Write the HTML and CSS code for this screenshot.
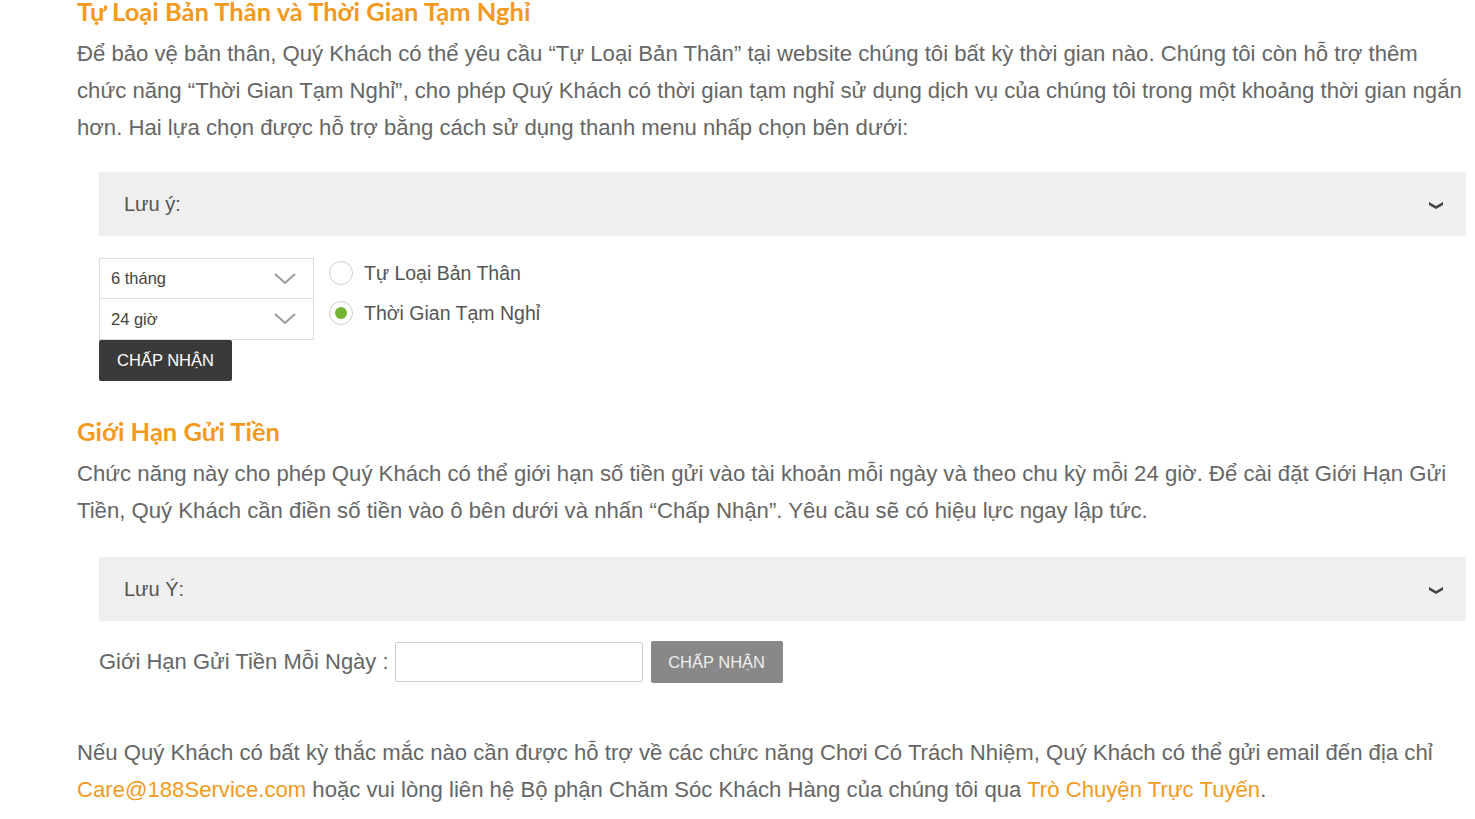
FILE: index.html
```html
<!DOCTYPE html>
<html>
  <head>
    <title>Chơi Có Trách Nhiệm</title>
    <meta charset="utf-8">
    <meta name="viewport" content="width=device-width, initial-scale=1">
    <link rel="stylesheet" href="styles.css">
  </head>
<body>
<div class="page">
  <h2 class="title first">Tự Loại Bản Thân và Thời Gian Tạm Nghỉ</h2>
  <p>Để bảo vệ bản thân, Quý Khách có thể yêu cầu “Tự Loại Bản Thân” tại website chúng tôi bất kỳ thời gian nào. Chúng tôi còn hỗ trợ thêm chức năng “Thời Gian Tạm Nghỉ”, cho phép Quý Khách có thời gian tạm nghỉ sử dụng dịch vụ của chúng tôi trong một khoảng thời gian ngắn hơn. Hai lựa chọn được hỗ trợ bằng cách sử dụng thanh menu nhấp chọn bên dưới:</p>

  <div class="note">
    <span>Lưu ý:</span>
    <svg class="caret" width="16" height="10" viewBox="0 0 16 10"><path d="M1 2 L8 6 L15 2 L15 5 L8 9 L1 5 Z" fill="#444"/></svg>
  </div>

  <div class="exclude">
    <div class="selects">
      <div class="select">
        <span>6 tháng</span>
        <svg width="24" height="14" viewBox="0 0 24 14"><path d="M2 2 L12 11 L22 2" fill="none" stroke="#999" stroke-width="2"/></svg>
      </div>
      <div class="select">
        <span>24 giờ</span>
        <svg width="24" height="14" viewBox="0 0 24 14"><path d="M2 2 L12 11 L22 2" fill="none" stroke="#999" stroke-width="2"/></svg>
      </div>
      <button class="btn dark">CHẤP NHẬN</button>
    </div>
    <div class="radios">
      <label class="radio"><span class="dot"></span>Tự Loại Bản Thân</label>
      <label class="radio on"><span class="dot"></span>Thời Gian Tạm Nghỉ</label>
    </div>
  </div>

  <h2 class="title">Giới Hạn Gửi Tiền</h2>
  <p>Chức năng này cho phép Quý Khách có thể giới hạn số tiền gửi vào tài khoản mỗi ngày và theo chu kỳ mỗi 24 giờ. Để cài đặt Giới Hạn Gửi Tiền, Quý Khách cần điền số tiền vào ô bên dưới và nhấn “Chấp Nhận”. Yêu cầu sẽ có hiệu lực ngay lập tức.</p>

  <div class="note second">
    <span>Lưu Ý:</span>
    <svg class="caret" width="16" height="10" viewBox="0 0 16 10"><path d="M1 2 L8 6 L15 2 L15 5 L8 9 L1 5 Z" fill="#444"/></svg>
  </div>

  <div class="limit">
    <span class="limit-label">Giới Hạn Gửi Tiền Mỗi Ngày :</span>
    <input type="text" class="amount">
    <button class="btn grey">CHẤP NHẬN</button>
  </div>

  <p class="contact">Nếu Quý Khách có bất kỳ thắc mắc nào cần được hỗ trợ về các chức năng Chơi Có Trách Nhiệm, Quý Khách có thể gửi email đến địa chỉ <a href="#">Care@188Service.com</a> hoặc vui lòng liên hệ Bộ phận Chăm Sóc Khách Hàng của chúng tôi qua <a href="#">Trò Chuyện Trực Tuyến</a>.</p>
</div>
</body>
</html>
```

FILE: styles.css
```css
body {
  margin: 0;
  background: #fff;
  font-family: "Liberation Sans", Arial, sans-serif;
  color: #666;
}
.page {
  width: 1389px;
  padding-left: 77px;
}
.title {
  font-family: Lato, "Open Sans", sans-serif;
  font-weight: bold;
  font-size: 25.5px;
  color: #f39a1e;
  margin: 0;
  line-height: 30px;
}
.title.first {
  margin-top: -4px;
}
p {
  margin: 9px -2px 0 0;
  font-size: 22.15px;
  line-height: 37px;
}
.note {
  margin: 26px 0 0 22px;
  height: 64px;
  background: #efefef;
  display: flex;
  align-items: center;
  justify-content: space-between;
  padding: 0 22px 0 25px;
  font-size: 20px;
  color: #555;
}
.note.second {
  margin-top: 28px;
}
.caret {
  margin-top: 2px;
}
.exclude {
  margin: 22px 0 0 22px;
  display: flex;
  gap: 15px;
}
.selects {
  width: 215px;
}
.select {
  height: 39px;
  border: 1px solid #ddd;
  display: flex;
  align-items: center;
  justify-content: space-between;
  padding: 0 16px 0 11px;
  font-size: 16.5px;
  color: #444;
}
.select + .select {
  border-top: 0;
  height: 40px;
}
.btn {
  border: 0;
  font-family: "Liberation Sans", Arial, sans-serif;
  cursor: pointer;
}
.btn.dark {
  background: #3a3a3a;
  color: #fff;
  font-size: 16.5px;
  height: 41px;
  width: 133px;
  border-radius: 2px;
}
.radios {
  display: flex;
  flex-direction: column;
  gap: 16px;
  padding-top: 3px;
}
.radio {
  display: flex;
  align-items: center;
  gap: 11px;
  font-size: 19.5px;
  color: #555;
  line-height: 24px;
}
.dot {
  width: 22px;
  height: 22px;
  border: 1px solid #ccc;
  border-radius: 50%;
  display: flex;
  align-items: center;
  justify-content: center;
}
.radio.on .dot::after {
  content: "";
  width: 12px;
  height: 12px;
  border-radius: 50%;
  background: #72b535;
}
.exclude + .title {
  margin-top: 35px;
}
.limit {
  margin: 20px 0 0 22px;
  display: flex;
  align-items: center;
  gap: 8px;
}
.limit-label {
  font-size: 22px;
  color: #666;
  margin-right: -2px;
}
.amount {
  width: 248px;
  height: 40px;
  box-sizing: border-box;
  border: 1px solid #ccc;
  border-radius: 2px;
  margin: 0;
}
.btn.grey {
  background: #888;
  color: #eee;
  font-size: 16.5px;
  height: 42px;
  width: 132px;
  border-radius: 2px;
}
.contact {
  margin-top: 51px;
}
a {
  color: #f39a1e;
  text-decoration: none;
}
```
